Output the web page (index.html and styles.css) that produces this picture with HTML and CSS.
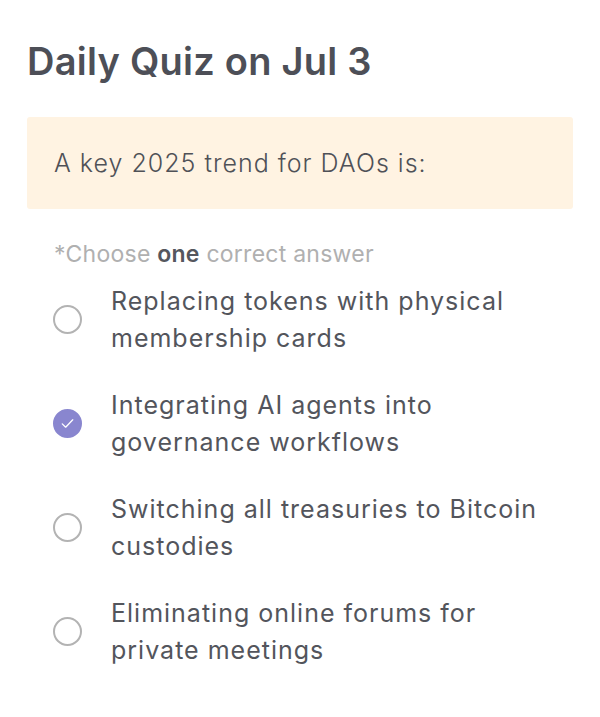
FILE: index.html
```html
<!DOCTYPE html>
<html lang="en">
<head>
    <meta charset="UTF-8">
    <meta name="viewport" content="width=device-width, initial-scale=1.0">
    <title>Daily Quiz</title>
    <link rel="stylesheet" href="styles.css">
</head>
<body>
    <div class="container">
        <h1 class="title">Daily Quiz on Jul 3</h1>

        <div class="question">A key 2025 trend for DAOs is:</div>

        <p class="hint">*Choose <strong>one</strong> correct answer</p>

        <ul class="options">
            <li class="option">
                <span class="radio"></span>
                <span class="option-text">Replacing tokens with physical membership cards</span>
            </li>
            <li class="option selected">
                <span class="radio">
                    <svg viewBox="0 0 24 24" width="21" height="21">
                        <path d="M6 12.4l3.9 3.8 8.1-8.4" fill="none" stroke="#fff" stroke-width="1.5" stroke-linecap="round" stroke-linejoin="round"/>
                    </svg>
                </span>
                <span class="option-text">Integrating AI agents into governance workflows</span>
            </li>
            <li class="option">
                <span class="radio"></span>
                <span class="option-text">Switching all treasuries to Bitcoin custodies</span>
            </li>
            <li class="option">
                <span class="radio"></span>
                <span class="option-text">Eliminating online forums for private meetings</span>
            </li>
        </ul>
    </div>
</body>
</html>
```

FILE: styles.css
```css
* { margin: 0; padding: 0; box-sizing: border-box; }
body {
    font-family: Inter, "Noto Sans", sans-serif;
    background: #fff;
    color: #55575e;
}
.container { padding: 36px 27px 20px; }
.title {
    font-size: 38px;
    font-weight: 600;
    line-height: 50px;
    color: #4d4f57;
    letter-spacing: 0.25px;
}
.question {
    margin-top: 31px;
    background: #fff3e2;
    border-radius: 3px;
    padding: 31px 27px 31px;
    font-size: 25px;
    font-weight: 300;
    line-height: 30px;
    color: #4f5157;
    letter-spacing: 1px;
}
.hint {
    margin-top: 30px;
    padding-left: 27px;
    font-size: 23px;
    line-height: 30px;
    color: #b0b0b0;
    letter-spacing: 0.25px;
}
.hint strong { color: #55575e; font-weight: 600; }
.options {
    list-style: none;
    margin-top: 14px;
}
.option {
    display: flex;
    align-items: center;
    gap: 29px;
    padding-left: 26px;
    margin-bottom: 31px;
}
.radio {
    flex: none;
    width: 29px;
    height: 29px;
    border-radius: 50%;
    border: 2px solid #b3b3b3;
    display: flex;
    align-items: center;
    justify-content: center;
}
.selected .radio {
    background: #8986cf;
    border-color: #8986cf;
}
.option-text {
    max-width: 440px;
    font-size: 25px;
    line-height: 36.5px;
    color: #53555c;
    letter-spacing: 1px;
}
```
